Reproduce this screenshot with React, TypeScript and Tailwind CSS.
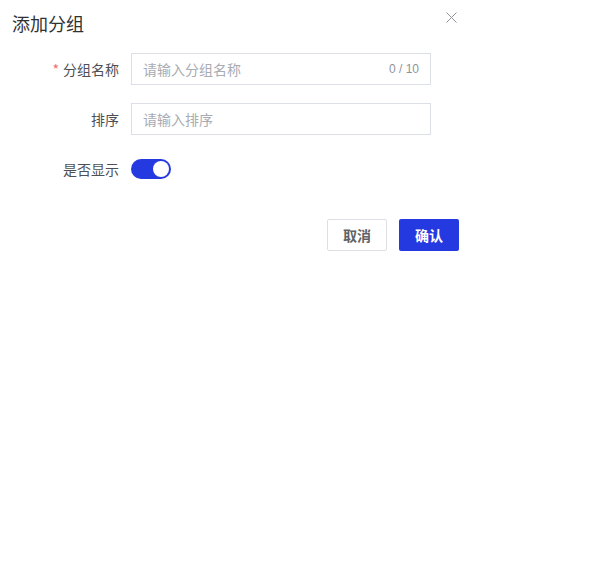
import React, { useState } from 'react';

const App: React.FC = () => {
  const [name, setName] = useState('');
  const [sort, setSort] = useState('');
  const [show, setShow] = useState(true);

  return (
    <div className="w-[593px] h-[568px] bg-white" style={{ fontFamily: '"Noto Sans CJK SC", "Noto Sans", sans-serif' }}>
      <div className="w-[471px] relative">
        {/* Header */}
        <div className="h-[46px] pl-3 flex items-center">
          <h2 className="text-[18px] text-[#303133] leading-none">添加分组</h2>
        </div>
        <button className="absolute right-[14px] top-[11px] w-[12px] h-[12px] flex items-center justify-center text-[#909399]">
          <svg width="11" height="11" viewBox="0 0 11 11" fill="none" stroke="currentColor" strokeWidth="1">
            <path d="M0.5 0.5 L10.5 10.5 M10.5 0.5 L0.5 10.5" />
          </svg>
        </button>

        {/* Form */}
        <div className="flex flex-col gap-[18px] pt-[7px]">
          <div className="flex items-center">
            <label className="w-[119px] text-right text-[14px] text-[#4d4f55]">
              <span className="text-[#f56c6c] mr-1">*</span>分组名称
            </label>
            <div className="ml-3 w-[300px] h-[32px] border border-[#dcdfe6] flex items-center px-[11px]">
              <input
                value={name}
                maxLength={10}
                onChange={(e) => setName(e.target.value)}
                placeholder="请输入分组名称"
                className="flex-1 outline-none text-[14px] text-[#606266] placeholder:text-[#a8abb2] bg-transparent"
              />
              <span className="text-[12px] text-[#909399]" style={{ fontFamily: '"Liberation Sans", sans-serif' }}>{name.length} / 10</span>
            </div>
          </div>

          <div className="flex items-center">
            <label className="w-[119px] text-right text-[14px] text-[#4d4f55]">排序</label>
            <div className="ml-3 w-[300px] h-[32px] border border-[#dcdfe6] flex items-center px-[11px]">
              <input
                value={sort}
                onChange={(e) => setSort(e.target.value)}
                placeholder="请输入排序"
                className="flex-1 outline-none text-[14px] text-[#606266] placeholder:text-[#a8abb2] bg-transparent"
              />
            </div>
          </div>

          <div className="flex items-center h-[32px]">
            <label className="w-[119px] text-right text-[14px] text-[#4d4f55]">是否显示</label>
            <button
              onClick={() => setShow(!show)}
              className={`ml-3 w-[40px] h-[20px] rounded-full flex items-center px-[2px] ${show ? 'bg-[#2539e0] justify-end' : 'bg-[#dcdfe6] justify-start'}`}
            >
              <span className="w-[16px] h-[16px] rounded-full bg-white" />
            </button>
          </div>
        </div>

        {/* Footer */}
        <div className="flex justify-end gap-3 pr-3 pt-[34px]">
          <button className="w-[60px] h-[32px] border border-[#dcdfe6] rounded-[2px] text-[14px] font-bold text-[#606266] bg-white">取消</button>
          <button className="w-[60px] h-[32px] rounded-[2px] text-[14px] font-bold text-white bg-[#2539e0]">确认</button>
        </div>
      </div>
    </div>
  );
};

export default App;
